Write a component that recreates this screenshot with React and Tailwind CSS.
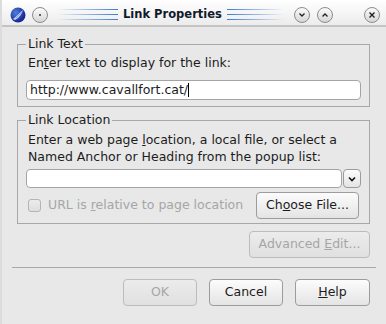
import React from "react";

const font = "font-['DejaVu_Sans','Liberation_Sans',sans-serif]";

const CircleBtn = ({ children, className = "" }) => (
  <div className={`w-[16px] h-[16px] rounded-full border border-[#8c8c8c] bg-linear-to-b from-[#fbfbfb] to-[#d6d6d6] flex items-center justify-center shrink-0 ${className}`}>
    {children}
  </div>
);

const Lines = ({ dir, className }) => (
  <div className={`flex flex-col gap-[4px] ${className}`}>
    {[0, 1, 2].map((i) => (
      <div
        key={i}
        className={`h-[1px] ${
          dir === "r"
            ? "bg-linear-to-r from-[#3b7bd0]/0 to-[#3b7bd0]"
            : "bg-linear-to-r from-[#3b7bd0] to-[#3b7bd0]/0"
        }`}
      />
    ))}
  </div>
);

const Btn = ({ children, disabled, className = "" }) => (
  <div
    className={`h-[27px] rounded-[4px] border flex items-center justify-center text-[12.5px] ${
      disabled
        ? "border-[#bcbcbc] bg-linear-to-b from-[#ececec] to-[#e0e0e0] text-[#a6a6a6]"
        : "border-[#9c9c9c] bg-linear-to-b from-[#fcfcfc] to-[#e4e4e4] text-[#1c1c1c]"
    } ${className}`}
  >
    {children}
  </div>
);

export default function App() {
  return (
    <div className={`w-[386px] h-[324px] bg-[#e8e8e8] overflow-hidden flex flex-col ${font} text-[#1c1c1c] border-l-[2px] border-[#dcdcdc]`}>
      {/* title bar */}
      <div className="h-[27px] pt-[4px] flex items-center bg-linear-to-b from-white to-[#ececec] border-b-[2px] border-[#c4c4c4] shrink-0">
        <div className="ml-[8px] w-[16px] h-[16px] shrink-0">
          <svg viewBox="0 0 16 16" width="16" height="16">
            <defs>
              <radialGradient id="g" cx="35%" cy="35%" r="70%">
                <stop offset="0" stopColor="#4f7fe0" />
                <stop offset="1" stopColor="#101e8c" />
              </radialGradient>
            </defs>
            <circle cx="8" cy="8" r="7.5" fill="url(#g)" />
            <path d="M3 12 C6 10 9 6 13 3 C12 7 9 11 5 13 Z" fill="#cfe0ff" opacity="0.9" />
            <path d="M6 11 C8 9 10 7 12 5" stroke="#6f9cf0" strokeWidth="0.8" fill="none" />
          </svg>
        </div>
        <CircleBtn className="ml-[6px]">
          <div className="w-[2px] h-[2px] rounded-full bg-[#333]" />
        </CircleBtn>
        <Lines dir="r" className="ml-[9px] w-[61px]" />
        <div className="ml-[5px] text-[11.5px] font-bold text-[#111a2c] leading-none">Link Properties</div>
        <Lines dir="l" className="ml-[5px] w-[57px]" />
        <CircleBtn className="ml-[10px]">
          <svg width="8" height="8" viewBox="0 0 8 8"><path d="M1.5 2.5 L4 5 L6.5 2.5" stroke="#222" strokeWidth="1.3" fill="none" /></svg>
        </CircleBtn>
        <CircleBtn className="ml-[7px]">
          <svg width="8" height="8" viewBox="0 0 8 8"><path d="M1.5 5.5 L4 3 L6.5 5.5" stroke="#222" strokeWidth="1.3" fill="none" /></svg>
        </CircleBtn>
        <CircleBtn className="ml-[31px]">
          <svg width="8" height="8" viewBox="0 0 8 8"><path d="M1.5 1.5 L6.5 6.5 M6.5 1.5 L1.5 6.5" stroke="#222" strokeWidth="1.4" fill="none" /></svg>
        </CircleBtn>
      </div>

      {/* body */}
      <div className="pl-[15px] pr-[16px] flex flex-col">
        <fieldset className="mt-[9px] border border-[#a8a8a8] px-[8px] pb-[6px]">
          <legend className="px-[2px] text-[12.5px] leading-[16px]">Link Text</legend>
          <div className="pl-[2px] pt-[3px] text-[12.5px] leading-[16px]">
            En<span className="underline">t</span>er text to display for the link:
          </div>
          <div className="mt-[9px] h-[20px] bg-white border border-[#a4a4a4] rounded-[4px] flex items-center pl-[3px] text-[12.5px]">
            http://www.cavallfort.cat/
            <span className="w-[1px] h-[14px] bg-black" />
          </div>
        </fieldset>

        <fieldset className="mt-[5px] border border-[#a8a8a8] px-[8px] pb-[4px]">
          <legend className="px-[2px] text-[12.5px] leading-[16px]">Link Location</legend>
          <div className="pl-[2px] pt-[3px] text-[12.5px] leading-[17px]">
            Enter a web page <span className="underline">l</span>ocation, a local file, or select a
            <br />
            Named Anchor or Heading from the popup list:
          </div>
          <div className="mt-[4px] flex h-[19px]">
            <div className="flex-1 bg-white border border-[#a4a4a4] rounded-[4px]" />
            <div className="w-[18px] ml-[1px] rounded-[4px] border border-[#9c9c9c] bg-linear-to-b from-[#fcfcfc] to-[#e4e4e4] flex items-center justify-center">
              <svg width="8" height="6" viewBox="0 0 8 6"><path d="M1 1.5 L4 4.5 L7 1.5" stroke="#111" strokeWidth="1.6" fill="none" /></svg>
            </div>
          </div>
          <div className="mt-[4px] flex items-center">
            <div className="ml-[2px] w-[13px] h-[13px] rounded-[3px] border border-[#b4b4b4] bg-linear-to-b from-[#ececec] to-[#dedede]" />
            <div className="ml-[7px] text-[12.5px] text-[#a6a6a6]">
              URL is <span className="underline">r</span>elative to page location
            </div>
            <Btn className="ml-auto mr-[2px] w-[103px]">
              Ch<span className="underline">o</span>ose File...
            </Btn>
          </div>
        </fieldset>

        <div className="mt-[7px] flex justify-end">
          <Btn disabled className="w-[121px]">
            Advanced&nbsp;<span className="underline">E</span>dit...
          </Btn>
        </div>
      </div>

      <div className="mt-[9px] mx-[10px] h-[1px] bg-[#a8a8a8]" />

      <div className="mt-[11px] pr-[16px] flex justify-end gap-[12px]">
        <Btn disabled className="w-[74px]">OK</Btn>
        <Btn className="w-[74px]">Cancel</Btn>
        <Btn className="w-[75px]">
          <span className="underline">H</span>elp
        </Btn>
      </div>
    </div>
  );
}
